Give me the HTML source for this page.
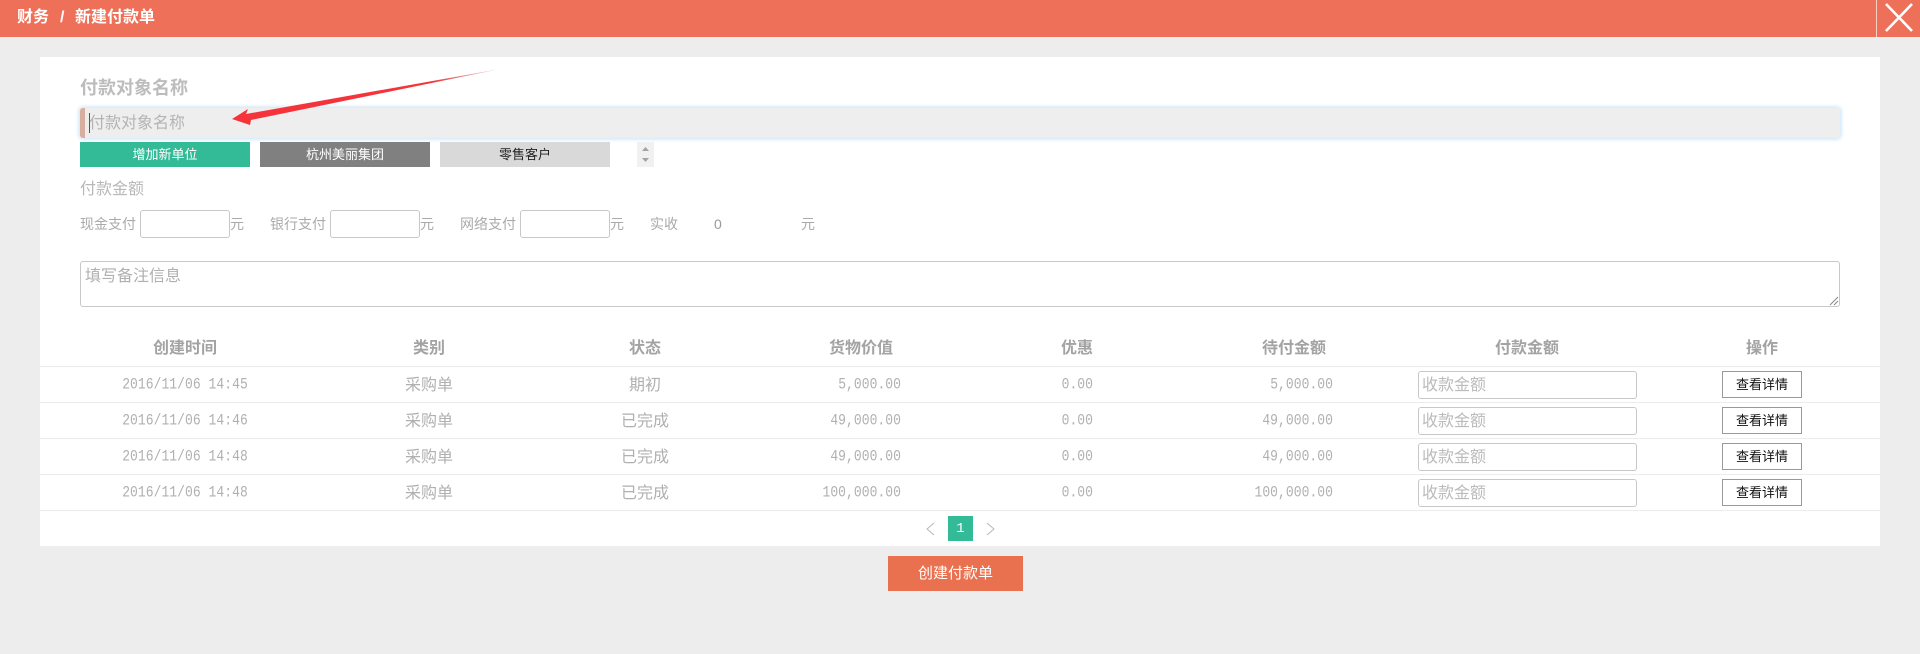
<!DOCTYPE html>
<html lang="zh-CN">
<head>
<meta charset="utf-8">
<title>新建付款单</title>
<style>
html,body{margin:0;padding:0;width:1920px;height:654px;overflow:hidden;background:#ededed;}
body{position:relative;font-family:"Liberation Sans","WenQuanYi Zen Hei","Noto Sans CJK SC",sans-serif;}
.a{position:absolute;white-space:nowrap;box-sizing:border-box;}
.c{text-align:center;}
.r{text-align:right;}
.lab{font-size:14px;color:#aaa;height:28px;line-height:28px;top:210px;}
.inp{top:210px;height:28px;width:90px;border:1px solid #c8c8c8;border-radius:3px;background:#fff;}
.th{font-size:16px;font-weight:bold;color:#a3a3a3;top:337px;height:24px;line-height:24px;}
.line{left:40px;width:1840px;height:1px;background:#ececec;}
.td{font-size:16px;color:#b0b0b0;height:24px;line-height:24px;}
.num{font-family:"Liberation Mono","DejaVu Sans Mono",monospace;font-size:13px;letter-spacing:.05px;color:#b0b0b0;height:24px;line-height:24px;transform:scaleY(1.2);}
.ri{left:1418px;width:219px;height:28px;border:1px solid #c8c8c8;border-radius:3px;background:#fff;font-size:16px;color:#bbb;line-height:28px;padding-left:3px;}
.bt{left:1722px;width:80px;height:27px;border:1px solid #999;background:#fff;font-size:13px;color:#111;line-height:25px;text-align:center;}
.chip{top:142px;width:170px;height:25px;line-height:25px;font-size:13px;text-align:center;}
</style>
</head>
<body>
<div class="a" style="left:0;top:0;width:1920px;height:37px;background:#ef7058;"></div>
<div class="a" style="left:17px;top:5px;height:26px;line-height:26px;font-size:16px;font-weight:bold;color:#fff;">财务</div>
<div class="a" style="left:60px;top:5px;height:26px;line-height:26px;font-size:16px;font-weight:bold;color:#fff;">/</div>
<div class="a" style="left:75px;top:5px;height:26px;line-height:26px;font-size:16px;font-weight:bold;color:#fff;">新建付款单</div>
<div class="a" style="left:1876px;top:0;width:1px;height:37px;background:#f7cfc4;"></div>
<svg class="a" style="left:1880px;top:0;" width="40" height="37" viewBox="0 0 40 37"><path d="M6 4 L32 31 M32 4 L6 31" stroke="#fff" stroke-width="2.6" fill="none"/></svg>

<div class="a" style="left:40px;top:57px;width:1840px;height:489px;background:#fff;"></div>

<div class="a" style="left:80px;top:76px;height:24px;line-height:24px;font-size:18px;font-weight:bold;color:#bcbcbc;">付款对象名称</div>

<div class="a" style="left:80px;top:108px;width:1760px;height:30px;background:#eeeeee;border-radius:3px;box-shadow:0 0 4px 1px #c5dff2;"></div>
<div class="a" style="left:80px;top:108px;width:5px;height:30px;background:#d8ae9f;border-radius:3px 0 0 3px;"></div>
<div class="a" style="left:89px;top:113px;width:1px;height:20px;background:#555;"></div>
<div class="a" style="left:89px;top:112px;height:24px;line-height:24px;font-size:16px;color:#b4b4b4;">付款对象名称</div>

<div class="a chip" style="left:80px;background:#33bb98;color:#fff;">增加新单位</div>
<div class="a chip" style="left:260px;background:#808080;color:#fff;">杭州美丽集团</div>
<div class="a chip" style="left:440px;background:#d9d9d9;color:#222;">零售客户</div>
<div class="a" style="left:637px;top:142px;width:17px;height:25px;background:#f1f1f1;"></div>
<svg class="a" style="left:637px;top:142px;" width="17" height="25" viewBox="0 0 17 25"><path d="M5 9 L8.500 5 L12 9Z M5 16 L12 16 L8.500 20Z" fill="#a3a3a3"/></svg>

<div class="a" style="left:80px;top:178px;height:24px;line-height:24px;font-size:16px;color:#b8b8b8;">付款金额</div>

<div class="a lab" style="left:80px;">现金支付</div>
<div class="a inp" style="left:140px;"></div>
<div class="a lab" style="left:230px;">元</div>
<div class="a lab" style="left:270px;">银行支付</div>
<div class="a inp" style="left:330px;"></div>
<div class="a lab" style="left:420px;">元</div>
<div class="a lab" style="left:460px;">网络支付</div>
<div class="a inp" style="left:520px;"></div>
<div class="a lab" style="left:610px;">元</div>
<div class="a lab" style="left:650px;">实收</div>
<div class="a lab" style="left:714px;color:#999;">0</div>
<div class="a lab" style="left:801px;">元</div>

<div class="a" style="left:80px;top:261px;width:1760px;height:46px;border:1px solid #c8c8c8;border-radius:3px;background:#fff;"></div>
<div class="a" style="left:85px;top:265px;height:24px;line-height:24px;font-size:16px;color:#b0b0b0;">填写备注信息</div>
<svg class="a" style="left:1828px;top:295px;" width="11" height="11" viewBox="0 0 11 11"><path d="M2 10 L10 2 M6 10 L10 6" stroke="#888" stroke-width="1" fill="none"/></svg>

<div class="a th c" style="left:125px;width:120px;">创建时间</div>
<div class="a th c" style="left:369px;width:120px;">类别</div>
<div class="a th c" style="left:585px;width:120px;">状态</div>
<div class="a th c" style="left:801px;width:120px;">货物价值</div>
<div class="a th c" style="left:1017px;width:120px;">优惠</div>
<div class="a th c" style="left:1234px;width:120px;">待付金额</div>
<div class="a th c" style="left:1467px;width:120px;">付款金额</div>
<div class="a th c" style="left:1702px;width:120px;">操作</div>

<div class="a line" style="top:366px;"></div>
<div class="a line" style="top:402px;"></div>
<div class="a line" style="top:438px;"></div>
<div class="a line" style="top:474px;"></div>
<div class="a line" style="top:510px;"></div>

<!-- row 1 -->
<div class="a num c" style="left:105px;width:160px;top:373px;">2016/11/06 14:45</div>
<div class="a td c" style="left:369px;width:120px;top:374px;">采购单</div>
<div class="a td c" style="left:585px;width:120px;top:374px;">期初</div>
<div class="a num r" style="left:741px;width:160px;top:373px;">5,000.00</div>
<div class="a num r" style="left:1013px;width:80px;top:373px;">0.00</div>
<div class="a num r" style="left:1173px;width:160px;top:373px;">5,000.00</div>
<div class="a ri" style="top:371px;">收款金额</div>
<div class="a bt" style="top:371px;">查看详情</div>

<!-- row 2 -->
<div class="a num c" style="left:105px;width:160px;top:409px;">2016/11/06 14:46</div>
<div class="a td c" style="left:369px;width:120px;top:410px;">采购单</div>
<div class="a td c" style="left:585px;width:120px;top:410px;">已完成</div>
<div class="a num r" style="left:741px;width:160px;top:409px;">49,000.00</div>
<div class="a num r" style="left:1013px;width:80px;top:409px;">0.00</div>
<div class="a num r" style="left:1173px;width:160px;top:409px;">49,000.00</div>
<div class="a ri" style="top:407px;">收款金额</div>
<div class="a bt" style="top:407px;">查看详情</div>

<!-- row 3 -->
<div class="a num c" style="left:105px;width:160px;top:445px;">2016/11/06 14:48</div>
<div class="a td c" style="left:369px;width:120px;top:446px;">采购单</div>
<div class="a td c" style="left:585px;width:120px;top:446px;">已完成</div>
<div class="a num r" style="left:741px;width:160px;top:445px;">49,000.00</div>
<div class="a num r" style="left:1013px;width:80px;top:445px;">0.00</div>
<div class="a num r" style="left:1173px;width:160px;top:445px;">49,000.00</div>
<div class="a ri" style="top:443px;">收款金额</div>
<div class="a bt" style="top:443px;">查看详情</div>

<!-- row 4 -->
<div class="a num c" style="left:105px;width:160px;top:481px;">2016/11/06 14:48</div>
<div class="a td c" style="left:369px;width:120px;top:482px;">采购单</div>
<div class="a td c" style="left:585px;width:120px;top:482px;">已完成</div>
<div class="a num r" style="left:741px;width:160px;top:481px;">100,000.00</div>
<div class="a num r" style="left:1013px;width:80px;top:481px;">0.00</div>
<div class="a num r" style="left:1173px;width:160px;top:481px;">100,000.00</div>
<div class="a ri" style="top:479px;">收款金额</div>
<div class="a bt" style="top:479px;">查看详情</div>

<!-- pagination -->
<svg class="a" style="left:920px;top:516px;" width="80" height="25" viewBox="0 0 80 25"><path d="M14 7 L7 13 L14 19 M67 7 L74 13 L67 19" stroke="#b8b8b8" stroke-width="1" fill="none"/></svg>
<div class="a c" style="left:948px;top:516px;width:25px;height:25px;line-height:27px;background:#33bb98;color:#fff;font-size:14px;font-family:'Liberation Mono',monospace;">1</div>

<div class="a c" style="left:888px;top:556px;width:135px;height:35px;line-height:35px;background:#e9714f;color:#fff;font-size:15px;">创建付款单</div>

<!-- annotation arrow -->
<svg class="a" style="left:225px;top:60px;" width="285" height="75" viewBox="225 60 285 75">
<defs><linearGradient id="g" x1="232" y1="119" x2="500" y2="69" gradientUnits="userSpaceOnUse"><stop offset="0" stop-color="#f5333a"/><stop offset="0.75" stop-color="#f5333a"/><stop offset="1" stop-color="#c89090" stop-opacity="0.5"/></linearGradient></defs>
<path d="M232 119 L248 109 L246 114 L500 69 L251 120 L250 125 Z" fill="url(#g)"/>
</svg>
</body>
</html>
